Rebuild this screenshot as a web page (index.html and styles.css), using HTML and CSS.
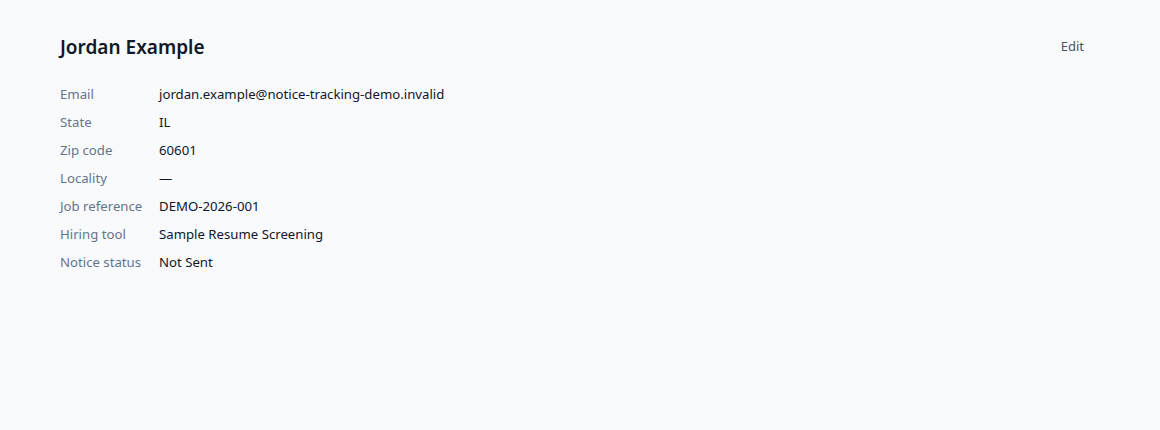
FILE: index.html
```html
<!DOCTYPE html>
<html lang="en">
<head>
<meta charset="utf-8">
<title>Jordan Example</title>
<link rel="stylesheet" href="styles.css">
</head>
<body>
<main class="page">
  <header class="head">
    <h1 class="title">Jordan Example</h1>
    <button class="edit" type="button">Edit</button>
  </header>
  <dl class="details">
    <dt>Email</dt><dd>jordan.example@notice-tracking-demo.invalid</dd>
    <dt>State</dt><dd>IL</dd>
    <dt>Zip code</dt><dd>60601</dd>
    <dt>Locality</dt><dd>—</dd>
    <dt>Job reference</dt><dd>DEMO-2026-001</dd>
    <dt>Hiring tool</dt><dd>Sample Resume Screening</dd>
    <dt>Notice status</dt><dd>Not Sent</dd>
  </dl>
</main>
</body>
</html>
```
FILE: styles.css
```css
html, body {
  margin: 0;
  padding: 0;
  background: #f8fafc;
  font-family: "Noto Sans", "Open Sans", sans-serif;
  color: #0f172a;
}
.page {
  padding: 32px 76px 32px 60px;
}
.head {
  display: flex;
  justify-content: space-between;
  align-items: center;
  height: 30px;
}
.title {
  margin: 0;
  font-size: 19px;
  font-weight: 600;
  color: #111827;
}
.edit {
  border: 0;
  background: none;
  padding: 0;
  margin-top: -2px;
  font: inherit;
  font-size: 13px;
  color: #475569;
  cursor: pointer;
}
.details {
  display: grid;
  grid-template-columns: 99px 1fr;
  margin: 18px 0 0;
  row-gap: 0;
  font-size: 13.2px;
}
.details dt {
  color: #64748b;
  line-height: 28px;
}
.details dd {
  margin: 0;
  color: #0f172a;
  line-height: 28px;
}
```
